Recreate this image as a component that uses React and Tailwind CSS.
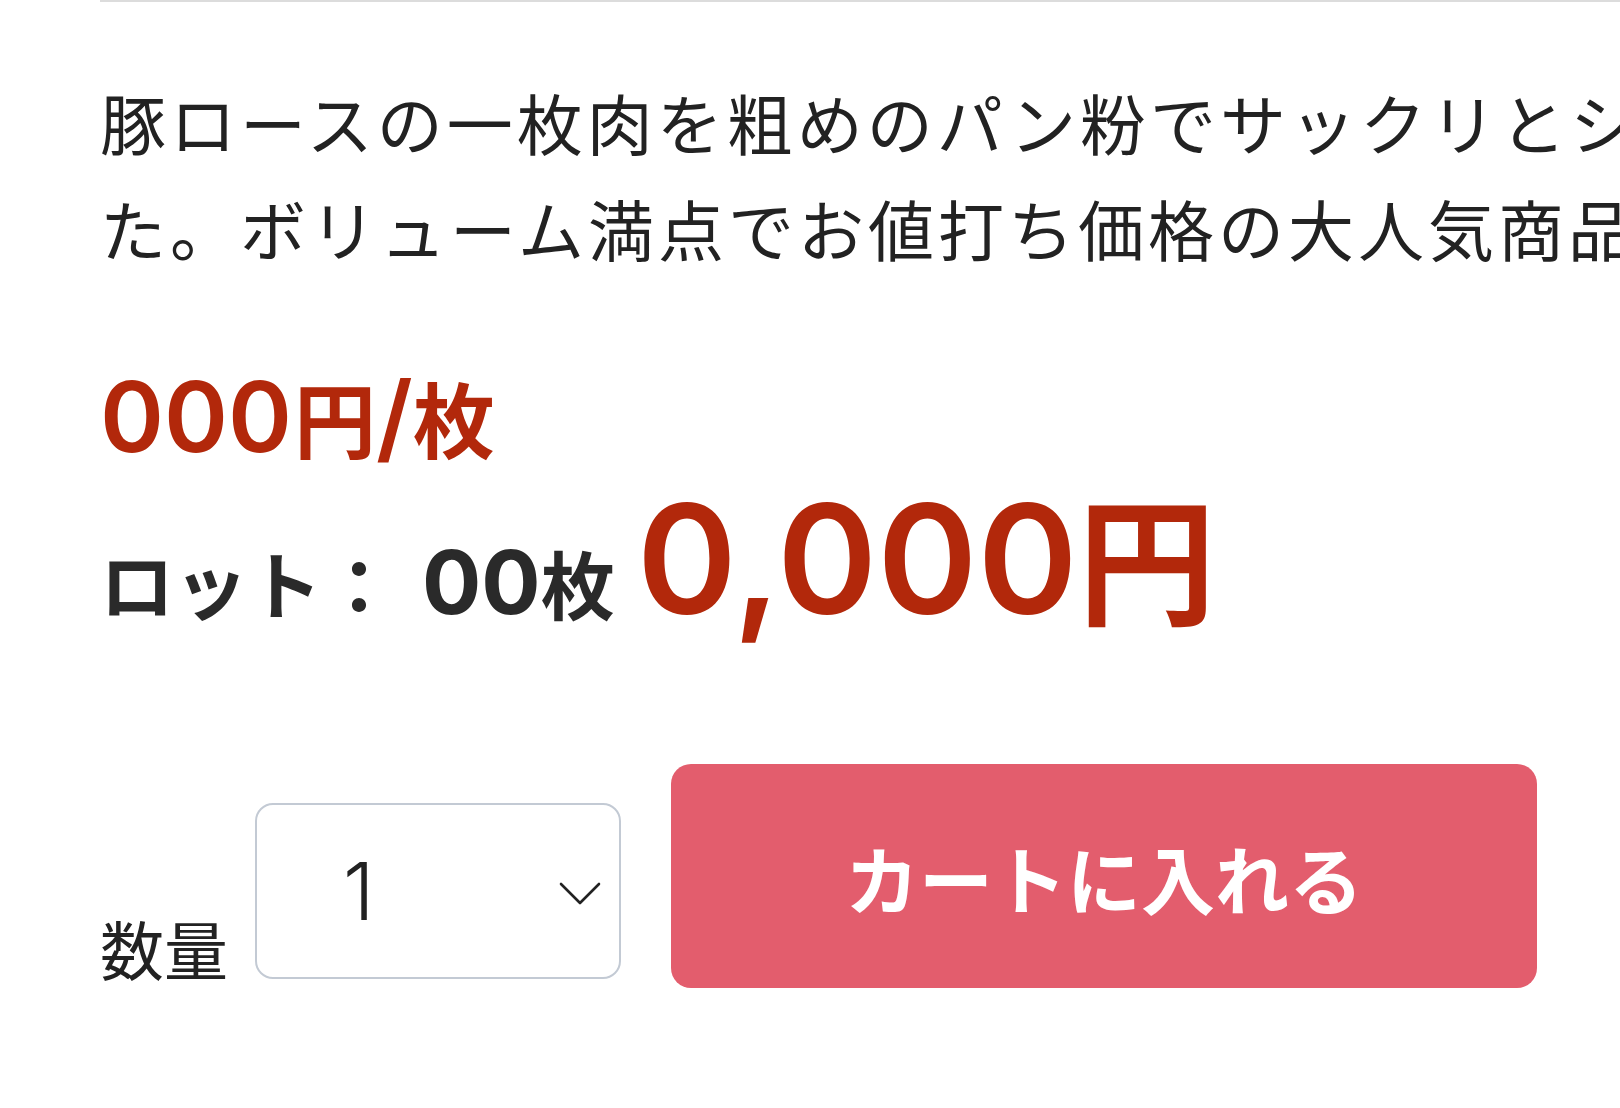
import React from "react";

// 商品詳細：説明・価格・カート
const jp = "font-[family-name:'Noto_Sans_CJK_JP',sans-serif]";
const num = "font-[family-name:Inter,'Noto_Sans_CJK_JP',sans-serif]";

const ChevronDown = () => (
  <svg width="42" height="26" viewBox="0 0 42 26" fill="none">
    <polyline
      points="2,3 21,22 40,3"
      stroke="#222"
      strokeWidth="2.6"
      strokeLinecap="round"
      strokeLinejoin="round"
    />
  </svg>
);

const App = () => {
  return (
    <div className="min-h-screen w-full overflow-hidden bg-white">
      <div className="ml-[100px] w-[1700px] border-t-2 border-[#dcdcdc]">
        {/* 商品説明 */}
        <p
          className={`${jp} mt-[66px] whitespace-nowrap text-[66px] leading-[106px] tracking-[4px] text-[#222]`}
        >
          豚ロースの一枚肉を粗めのパン粉でサックリとシンプルに揚げまし
          <br />
          た。ボリューム満点でお値打ち価格の大人気商品です。
        </p>

        {/* 単価 */}
        <div className="mt-[88px] flex items-baseline text-[#b2280b]">
          <span className={`${num} text-[97px] font-semibold leading-none`}>000</span>
          <span className={`${jp} ml-[2px] text-[82px] font-bold leading-none`}>円</span>
          <span className={`${num} text-[97px] font-semibold leading-none`}>/</span>
          <span className={`${jp} text-[82px] font-bold leading-none`}>枚</span>
        </div>

        {/* ロット・合計 */}
        <div className="mt-[18px] flex items-baseline font-bold">
          <span className={`${jp} text-[74px] leading-none text-[#2a2a2a]`}>
            ロット：
          </span>
          <span className={`${num} ml-[26px] text-[88px] leading-none text-[#2a2a2a]`}>
            00
          </span>
          <span className={`${jp} text-[74px] leading-none text-[#2a2a2a]`}>枚</span>
          <span
            className={`${num} ml-[22px] text-[152px] font-semibold leading-none text-[#b2280b]`}
          >
            0,000
          </span>
          <span className={`${jp} text-[138px] leading-none text-[#b2280b]`}>円</span>
        </div>

        {/* 数量・カート */}
        <div className="mt-[129px] flex items-end">
          <div className="mb-[9px] flex items-end gap-[27px]">
            <span className={`${jp} text-[64px] leading-none text-[#222]`}>数量</span>
            <div className="relative flex h-[176px] w-[366px] items-center rounded-[18px] border-2 border-[#c3cad4] bg-white pl-[86px]">
              <span className={`${num} text-[80px] font-light leading-none text-[#222]`}>1</span>
              <span className="absolute right-[18px] top-[76px]">
                <ChevronDown />
              </span>
            </div>
          </div>
          <button
            type="button"
            className={`${jp} ml-[50px] flex h-[224px] w-[866px] items-center justify-center rounded-[20px] bg-[#e35d6d] text-[74px] font-bold text-white`}
          >
            カートに入れる
          </button>
        </div>
      </div>
    </div>
  );
};

export default App;
